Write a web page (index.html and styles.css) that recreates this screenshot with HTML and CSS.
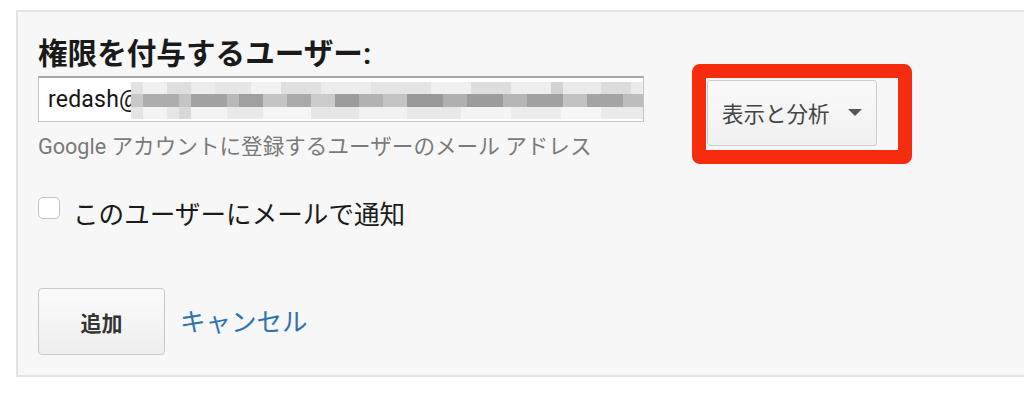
FILE: index.html
```html
<!DOCTYPE html>
<html lang="ja">
<head>
<meta charset="utf-8">
<link rel="stylesheet" href="styles.css">
</head>
<body>
<div class="panel">
  <h2 class="title">権限を付与するユーザー:</h2>
  <div class="row">
    <div class="field">
      <div class="input">
        <span class="value">redash@</span>
        <div class="mosaic">
          <div class="m-row r1"></div>
          <div class="m-row r2"></div>
          <div class="m-row r3"></div>
        </div>
      </div>
      <p class="help">Google アカウントに登録するユーザーのメール アドレス</p>
    </div>
    <div class="select-wrap">
      <button class="select">表示と分析<span class="caret"></span></button>
      <div class="highlight"></div>
    </div>
  </div>
  <label class="notify"><span class="check"></span>このユーザーにメールで通知</label>
  <div class="actions">
    <button class="add">追加</button>
    <a class="cancel">キャンセル</a>
  </div>
</div>
</body>
</html>
```

FILE: styles.css
```css
* { box-sizing: border-box; }
body {
  margin: 0;
  background: #ffffff;
  font-family: Roboto, "Noto Sans CJK JP", sans-serif;
  overflow: hidden;
}
.panel {
  margin: 10px 0 0 16px;
  height: 367px;
  width: 1020px;
  background: #f7f7f7;
  border: 2px solid #e3e3e3;
  border-right: none;
  padding: 23px 0 0 20px;
}
.title {
  margin: 0;
  font-size: 29.6px;
  line-height: 38px;
  font-weight: 700;
  color: #1a1a1a;
}
.row {
  display: flex;
  align-items: flex-start;
  margin-top: 3px;
}
.field { width: 606px; }
.input {
  position: relative;
  height: 46px;
  background: #fff;
  border: 1px solid #c4c4c4;
  border-top: 2px solid #a8a8a8;
  display: flex;
  align-items: center;
  padding-left: 9px;
  overflow: hidden;
}
.value {
  font-size: 23px;
  color: #151515;
  letter-spacing: 0.2px;
}
.mosaic {
  position: absolute;
  left: 92px;
  right: 0;
  top: 4px;
  bottom: 2px;
  display: flex;
  flex-direction: column;
}
.m-row { flex: 1; }
.r1 {
  background: linear-gradient(90deg,
    #e2e2e2 0 12px, #f0f0f0 12px 36px, #dfdfdf 36px 60px, #ececec 60px 84px,
    #e6e6e6 84px 120px, #f2f2f2 120px 150px, #e0e0e0 150px 190px, #ececec 190px 240px,
    #e4e4e4 240px 300px, #f0f0f0 300px 340px, #dedede 340px 380px, #eeeeee 380px 420px,
    #d2d2d2 420px 432px, #eaeaea 432px 470px, #dcdcdc 470px 500px, #ebebeb 500px);
}
.r2 {
  background: linear-gradient(90deg,
    #c8c8c8 0 12px, #adadad 12px 48px, #c4c4c4 48px 60px, #a2a2a2 60px 96px,
    #b8b8b8 96px 108px, #9f9f9f 108px 132px, #c4c4c4 132px 156px, #aaaaaa 156px 180px,
    #cbcbcb 180px 204px, #9c9c9c 204px 228px, #b2b2b2 228px 252px, #c3c3c3 252px 276px,
    #999999 276px 312px, #b0b0b0 312px 336px, #9c9c9c 336px 372px, #b6b6b6 372px 396px,
    #a1a1a1 396px 432px, #c2c2c2 432px 456px, #a4a4a4 456px 492px, #bdbdbd 492px);
}
.r3 {
  background: linear-gradient(90deg,
    #e4e4e4 0 12px, #f4f4f4 12px 36px, #e6e6e6 36px 48px, #d8d8d8 48px 60px,
    #f3f3f3 60px 96px, #e9e9e9 96px 132px, #f5f5f5 132px 180px, #e6e6e6 180px 228px,
    #f1f1f1 228px 276px, #e8e8e8 276px 330px, #f4f4f4 330px 380px, #ececec 380px 430px,
    #f6f6f6 430px 470px, #eaeaea 470px);
}
.help {
  margin: 10px 0 0;
  font-size: 21.6px;
  line-height: 30px;
  color: #7a7a7a;
}
.select-wrap {
  position: relative;
  margin: 4px 0 0 63px;
}
.select {
  display: flex;
  align-items: center;
  width: 170px;
  height: 66px;
  padding: 0 0 2px 14px;
  border: 1px solid #cdcdcd;
  border-radius: 3px;
  background: linear-gradient(#fafafa, #f0f0f0);
  font-family: Roboto, "Noto Sans CJK JP", sans-serif;
  font-size: 21.5px;
  color: #444;
}
.caret {
  margin-left: 18px;
  width: 0;
  height: 0;
  border-left: 7px solid transparent;
  border-right: 7px solid transparent;
  border-top: 7px solid #555;
}
.highlight {
  position: absolute;
  left: -15px;
  top: -16px;
  width: 220px;
  height: 100px;
  border: 14px solid #f62c0e;
  border-radius: 8px;
}
.notify {
  display: flex;
  align-items: center;
  margin-top: 35px;
  font-size: 25.6px;
  line-height: 36px;
  color: #1a1a1a;
}
.check {
  width: 22px;
  height: 22px;
  border: 1px solid #c3c3c3;
  border-radius: 5px;
  background: #fff;
  margin-right: 13px;
  margin-top: -15px;
}
.actions {
  display: flex;
  align-items: center;
  margin-top: 55px;
}
.add {
  width: 127px;
  height: 67px;
  border: 1px solid #c9c9c9;
  border-radius: 4px;
  background: linear-gradient(#fbfbfb, #eeeeee);
  font-family: Roboto, "Noto Sans CJK JP", sans-serif;
  font-size: 21px;
  font-weight: 700;
  color: #333;
}
.cancel {
  margin: -4px 0 0 15px;
  font-size: 25.5px;
  color: #2f72b2;
}
```
